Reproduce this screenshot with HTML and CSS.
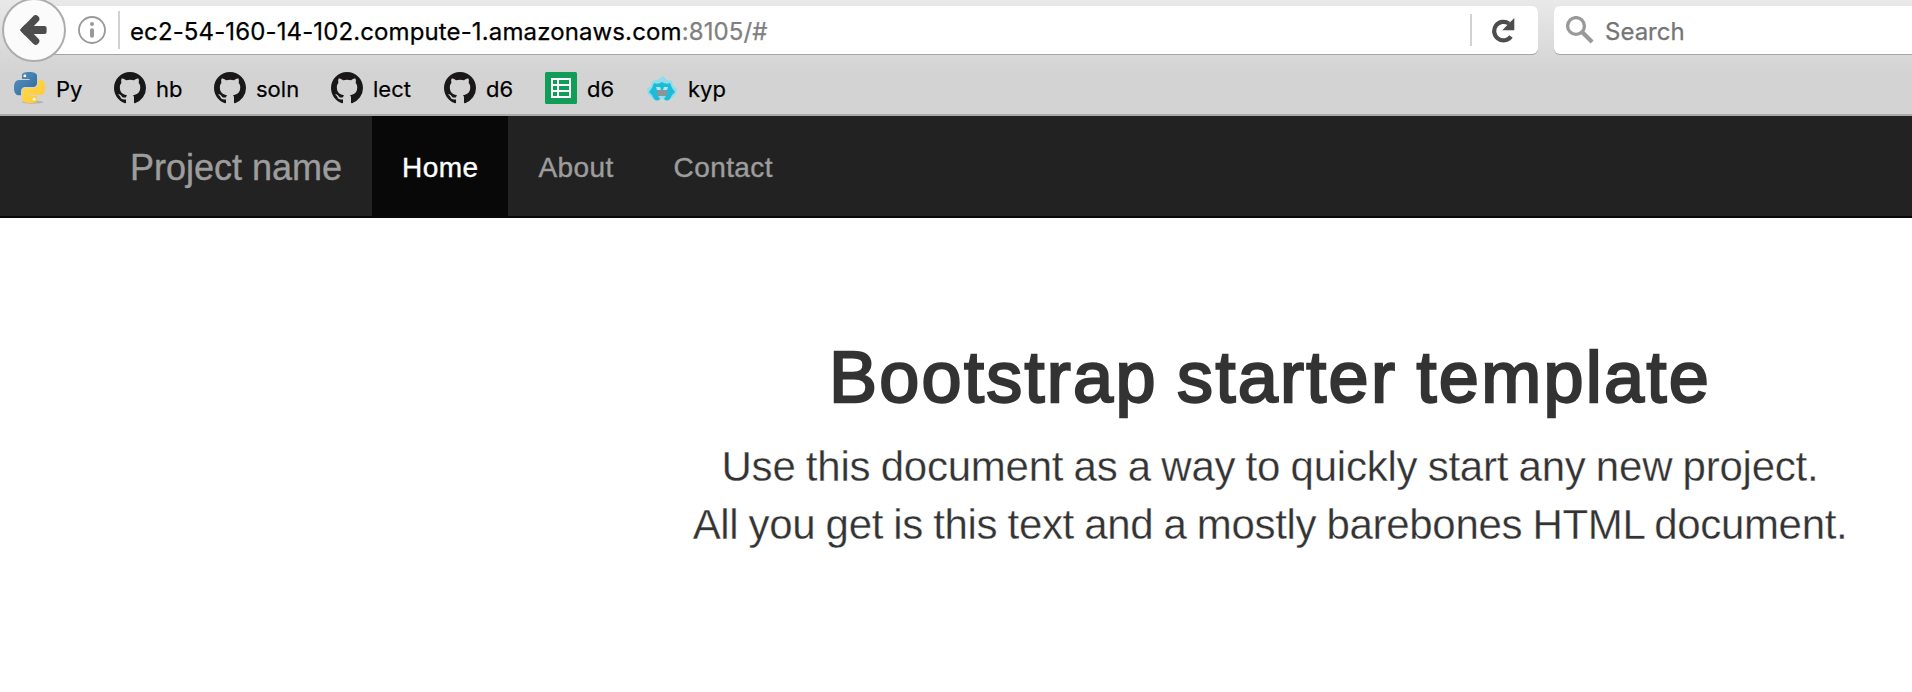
FILE: index.html
```
<!DOCTYPE html>
<html lang="en">
<head>
<meta charset="utf-8">
<title>Bootstrap starter template</title>
<link rel="stylesheet" href="styles.css">
</head>
<body>
<svg class="defs" width="0" height="0" aria-hidden="true">
  <symbol id="octocat" viewBox="0 0 16 16"><path fill="#191717" fill-rule="evenodd" d="M8 0C3.58 0 0 3.58 0 8c0 3.54 2.29 6.53 5.47 7.59.4.07.55-.17.55-.38 0-.19-.01-.82-.01-1.49-2.01.37-2.53-.49-2.69-.94-.09-.23-.48-.94-.82-1.13-.28-.15-.68-.52-.01-.53.63-.01 1.08.58 1.23.82.72 1.21 1.87.87 2.33.66.07-.52.28-.87.51-1.07-1.78-.2-3.64-.89-3.64-3.95 0-.87.31-1.59.82-2.15-.08-.2-.36-1.02.08-2.12 0 0 .67-.21 2.2.82.64-.18 1.32-.27 2-.27s1.36.09 2 .27c1.53-1.04 2.2-.82 2.2-.82.44 1.1.16 1.92.08 2.12.51.56.82 1.27.82 2.15 0 3.07-1.87 3.75-3.65 3.95.29.25.54.73.54 1.48 0 1.07-.01 1.93-.01 2.2 0 .21.15.46.55.38A8.01 8.01 0 0 0 16 8c0-4.42-3.58-8-8-8z"/></symbol>
</svg>
<header class="chrome">
  <div class="toolbar">
    <div class="urlbar">
      <div class="back">
        <svg width="28" height="32" viewBox="0 0 28 32"><path d="M5.8 16 16.6 5M5.8 16l10.8 11" fill="none" stroke="#4d4d4d" stroke-width="7.4" stroke-linecap="round"/><path d="M.8 16 6 10.6V12h19.6a2 2 0 0 1 2 2v4a2 2 0 0 1-2 2H6v1.4z" fill="#4d4d4d"/></svg>
      </div>
      <svg class="info" width="28" height="28" viewBox="0 0 28 28"><circle cx="14" cy="14" r="13" fill="none" stroke="#999" stroke-width="1.8"/><circle cx="14" cy="8" r="2" fill="#999"/><rect x="12" y="12.3" width="4" height="9.4" rx="1.8" fill="#999"/></svg>
      <span class="rule"></span>
      <div class="address">ec2-54-160-14-102.compute-1.amazonaws.com<span class="port">:8105/#</span></div>
      <span class="rule short"></span>
      <svg class="reload" width="24" height="26" viewBox="0 0 24 26"><path d="M20 19.6A9.3 9.3 0 1 1 18 6.6" fill="none" stroke="#4d4d4d" stroke-width="4.2"/><path d="M23.3 1v12.2H11.2z" fill="#4d4d4d"/></svg>
    </div>
    <div class="search">
      <svg width="28" height="28" viewBox="0 0 28 28"><circle cx="10" cy="10" r="8.4" fill="none" stroke="#999" stroke-width="3.3"/><path d="m15.8 15.8 10.3 10.3" stroke="#999" stroke-width="4.2"/></svg>
      <span>Search</span>
    </div>
  </div>
  <div class="bookmarks">
    <a class="mark"><svg width="32" height="32" viewBox="0 0 24 24">
      <defs>
        <linearGradient id="blue" x1="0" y1="0" x2="1" y2="1"><stop offset="0" stop-color="#5593c4"/><stop offset="1" stop-color="#306998"/></linearGradient>
        <linearGradient id="gold" x1="0" y1="0" x2="1" y2="1"><stop offset="0" stop-color="#ffc62e"/><stop offset="1" stop-color="#ffdc55"/></linearGradient>
      </defs>
      <ellipse cx="14" cy="22.6" rx="8" ry="1.2" fill="#999" opacity=".55"/>
      <g transform="scale(.97)">
      <path fill="url(#blue)" d="M14.25.18l.9.2.73.26.59.3.45.32.34.34.25.34.16.33.1.3.04.26.02.2-.01.13V8.5l-.05.63-.13.55-.21.46-.26.38-.3.31-.33.25-.35.19-.35.14-.33.1-.3.07-.26.04-.21.02H8.77l-.69.05-.59.14-.5.22-.41.27-.33.32-.27.35-.2.36-.15.37-.1.35-.07.32-.04.27-.02.21v3.06H3.17l-.21-.03-.28-.07-.32-.12-.35-.18-.36-.26-.36-.36-.35-.46-.32-.59-.28-.73-.21-.88-.14-1.05-.05-1.23.06-1.22.16-1.04.24-.87.32-.71.36-.57.4-.44.42-.33.42-.24.4-.16.36-.1.32-.05.24-.01h.16l.06.01h8.16v-.83H6.18l-.01-2.75-.02-.37.05-.34.11-.31.17-.28.25-.26.31-.23.38-.2.44-.18.51-.15.58-.12.64-.1.71-.06.77-.04.84-.02 1.27.05z"/>
      <path fill="url(#gold)" transform="rotate(180 12 12)" d="M14.25.18l.9.2.73.26.59.3.45.32.34.34.25.34.16.33.1.3.04.26.02.2-.01.13V8.5l-.05.63-.13.55-.21.46-.26.38-.3.31-.33.25-.35.19-.35.14-.33.1-.3.07-.26.04-.21.02H8.77l-.69.05-.59.14-.5.22-.41.27-.33.32-.27.35-.2.36-.15.37-.1.35-.07.32-.04.27-.02.21v3.06H3.17l-.21-.03-.28-.07-.32-.12-.35-.18-.36-.26-.36-.36-.35-.46-.32-.59-.28-.73-.21-.88-.14-1.05-.05-1.23.06-1.22.16-1.04.24-.87.32-.71.36-.57.4-.44.42-.33.42-.24.4-.16.36-.1.32-.05.24-.01h.16l.06.01h8.16v-.83H6.18l-.01-2.75-.02-.37.05-.34.11-.31.17-.28.25-.26.31-.23.38-.2.44-.18.51-.15.58-.12.64-.1.71-.06.77-.04.84-.02 1.27.05z"/>
      <circle cx="8.4" cy="3" r="1.1" fill="#fff"/><circle cx="15.6" cy="21" r="1.1" fill="#fff"/>
      </g></svg>Py</a>
    <a class="mark"><svg width="32" height="32"><use href="#octocat"/></svg>hb</a>
    <a class="mark wide"><svg width="32" height="32"><use href="#octocat"/></svg>soln</a>
    <a class="mark mid"><svg width="32" height="32"><use href="#octocat"/></svg>lect</a>
    <a class="mark"><svg width="32" height="32"><use href="#octocat"/></svg>d6</a>
    <a class="mark"><svg width="32" height="32" viewBox="0 0 32 32"><rect width="32" height="32" rx="1.5" fill="#0f9d58"/><rect x="7" y="7" width="18" height="18" fill="none" stroke="#fff" stroke-width="2"/><path d="M7 13h18M7 19h18M13 7v18" stroke="#fff" stroke-width="2"/></svg>d6</a>
    <a class="mark"><svg width="32" height="32" viewBox="0 0 32 32">
      <path fill="#8fdcec" d="m17 4 4 4 5 1 1 5 4 3-1 5-4 4-4 2H10l-4-2-4-4-1-5 4-3 1-5 5-1z"/>
      <path fill="#1cbbd9" d="M8 11q4 2 8-1 4 3 8 1l2 5 3 4-3 3-2 4q-3 3-6 0l2-3h-8l2 3q-3 3-6 0l-2-4-3-3 3-4z"/>
      <path fill="#b5e6ef" d="M10 15h4l1 3h-4zM22 15h-4l-1 3h4z"/>
      <rect x="11" y="18" width="10" height="6" rx="2" fill="#8d9496"/><path d="m16 25 2 5h-4z" fill="#cfdde0"/></svg>kyp</a>
  </div>
</header>
<nav class="navbar">
  <a class="brand">Project name</a>
  <a class="item active">Home</a>
  <a class="item">About</a>
  <a class="item">Contact</a>
</nav>
<main class="starter">
  <h1>Bootstrap starter template</h1>
  <p class="lead">Use this document as a way to quickly start any new project.<br><span class="tight">All you get is this text and a mostly barebones HTML document.</span></p>
</main>
</body>
</html>
```
FILE: styles.css
```
* { box-sizing: border-box; }
body {
  margin: 0;
  height: 692px;
  overflow: hidden;
  background: #fff;
  color: #333;
  font-family: "Liberation Sans", Arial, sans-serif;
}
svg { display: block; flex: none; }
.defs { position: absolute; }

/* Browser chrome */
.chrome {
  height: 116px;
  border-bottom: 2px solid #aaa;
  background: linear-gradient(#e9e9e9 0, #d3d3d3 72px, #d3d3d3 100%);
  font-family: Inter, Roboto, sans-serif;
  color: #000;
  -webkit-text-stroke: .25px currentColor;
}
.toolbar { display: flex; gap: 16px; height: 66px; padding-top: 6px; }
.urlbar {
  display: flex;
  align-items: center;
  width: 1504px;
  height: 48px;
  margin-left: 34px;
  background: #fff;
  border-radius: 6px;
  box-shadow: 0 1px 0 #a6a6a6;
}
.back {
  display: flex;
  align-items: center;
  justify-content: center;
  flex: none;
  width: 64px;
  height: 64px;
  margin-left: -32px;
  border: 2px solid #adadad;
  border-radius: 50%;
  background: #fbfbfb;
}
.back svg { margin-right: 3px; }
.info { margin: 0 12px; }
.rule { flex: none; width: 2px; height: 38px; background: #d2d2d2; }
.rule.short { height: 32px; }
.address {
  flex: 1;
  padding: 4px 0 0 10px;
  font-size: 24px;
  line-height: 48px;
  letter-spacing: .12px;
  white-space: nowrap;
}
.port { color: #808080; }
.reload { margin: 0 23px 0 19px; }
.search {
  display: flex;
  flex: 1;
  gap: 11px;
  height: 48px;
  padding-left: 12px;
  background: #fff;
  border-radius: 6px 0 0 6px;
  box-shadow: 0 1px 0 #a6a6a6;
  color: #757575;
  font-size: 24px;
  line-height: 52px;
}
.search svg { margin-top: 10px; }
.bookmarks { display: flex; height: 48px; padding: 6px 0 0 14px; }
.mark {
  display: flex;
  gap: 10px;
  width: 101px;
  height: 32px;
  font-size: 22px;
  line-height: 35px;
  text-shadow: 0 1px 0 rgba(255, 255, 255, .5);
}
.mark:nth-child(-n+2) { width: 100px; }
.mark.wide { width: 117px; }
.mark.mid { width: 113px; }

/* Page */
.navbar {
  display: flex;
  height: 102px;
  padding-left: 100px;
  background: #222;
  border-bottom: 2px solid #080808;
}
.brand, .item {
  padding: 0 30px;
  color: #9d9d9d;
  line-height: 103px;
  -webkit-text-stroke: .4px currentColor;
}
.brand { font-size: 36px; }
.item { font-size: 28px; letter-spacing: .4px; }
.item.active { background: #080808; color: #fff; }
.starter { margin-left: 628px; padding-top: 120px; text-align: center; }
h1 {
  margin: 0;
  font-size: 72px;
  font-weight: 400;
  line-height: 79px;
  letter-spacing: 2.3px;
  word-spacing: -3px;
  -webkit-text-stroke: 2.3px #333;
}
.lead {
  margin: 21px 0 0;
  font-size: 42px;
  line-height: 58px;
  letter-spacing: -.23px;
  word-spacing: -1.1px;
  -webkit-text-stroke: .3px #fff;
}
.tight { letter-spacing: -.32px; }
```
